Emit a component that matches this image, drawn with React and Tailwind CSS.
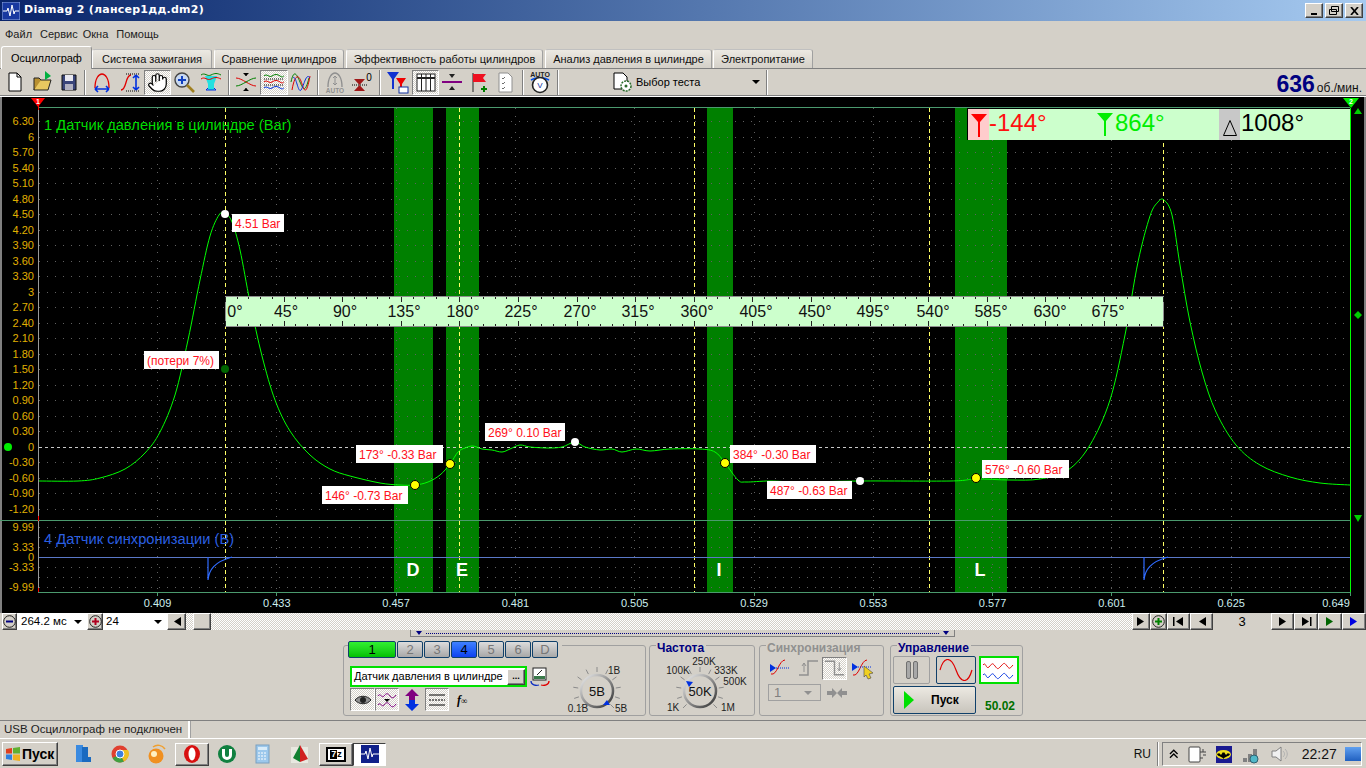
import React from 'react';
import { Hand } from 'lucide-react';

const raised = 'border border-t-white border-l-white border-r-[#404040] border-b-[#404040] shadow-[inset_-1px_-1px_0_#808080] bg-[#d4d0c8]';
const dither = 'bg-[image:repeating-conic-gradient(#ffffff_0%_25%,#d4d0c8_0%_50%)] bg-[length:2px_2px]';
const pressed = `${dither} border border-t-[#808080] border-l-[#808080] border-r-white border-b-white`;

// smooth line through points
const smooth = (pts) => {
  let d = `M${pts[0][0]} ${pts[0][1]}`;
  for (let i = 0; i < pts.length - 1; i++) {
    const p0 = pts[i - 1] || pts[i];
    const p1 = pts[i];
    const p2 = pts[i + 1];
    const p3 = pts[i + 2] || p2;
    const c1 = [p1[0] + (p2[0] - p0[0]) / 6, p1[1] + (p2[1] - p0[1]) / 6];
    const c2 = [p2[0] - (p3[0] - p1[0]) / 6, p2[1] - (p3[1] - p1[1]) / 6];
    d += `C${c1[0].toFixed(1)} ${c1[1].toFixed(1)} ${c2[0].toFixed(1)} ${c2[1].toFixed(1)} ${p2[0]} ${p2[1]}`;
  }
  return d;
};

const pressure = [
  [39, 481], [78, 481], [100, 478], [125, 469], [145, 453], [160, 432], [175, 395], [188, 340], [200, 280], [210, 236], [219, 215], [225, 213],
  [232, 222], [240, 250], [250, 302], [262, 356], [275, 400], [290, 431], [310, 455], [330, 469], [350, 476], [380, 483], [400, 485], [415, 485],
  [428, 482], [440, 475], [450, 464], [458, 452], [465, 448], [473, 446], [482, 449], [492, 450], [502, 452], [510, 449], [520, 445], [530, 447],
  [548, 448], [562, 447], [575, 442], [585, 447], [600, 450], [612, 449], [622, 452], [636, 449], [650, 451], [670, 449], [700, 449], [715, 452],
  [725, 463], [738, 480], [746, 482], [770, 481], [800, 482], [860, 481], [950, 481], [976, 479], [1010, 480], [1040, 479], [1068, 470], [1090, 445],
  [1110, 400], [1125, 335], [1138, 262], [1150, 216], [1158, 202], [1164, 200], [1172, 215], [1180, 265], [1190, 322], [1202, 372], [1216, 412],
  [1236, 445], [1260, 465], [1290, 477], [1320, 483], [1350, 485],
];

const syncDip = (x) => `M${x} 557V580C${x + 1} 570 ${x + 6} 562 ${x + 24} 557`;

const yLabels = ['6.30', '6', '5.70', '5.40', '5.10', '4.80', '4.50', '4.20', '3.90', '3.60', '3.30', '3', '2.70', '2.40', '2.10', '1.80', '1.50', '1.20', '0.90', '0.60', '0.30', '0', '-0.30', '-0.60', '-0.90', '-1.20'];
const lowLabels = [['9.99', 527], ['3.33', 547], ['0', 557], ['-3.33', 567], ['-9.99', 587]];
const xLabels = ['0.409', '0.433', '0.457', '0.481', '0.505', '0.529', '0.553', '0.577', '0.601', '0.625', '0.649'];
const angles = [[0, 235], [45, 286], [90, 345], [135, 404], [180, 463], [225, 521], [270, 580], [315, 638], [360, 697], [405, 756], [450, 815], [495, 873], [540, 933], [585, 991], [630, 1050], [675, 1108]];
const bands = [[394, 39, 'D', 413], [446, 33, 'E', 462], [707, 26, 'I', 719], [955, 52, 'L', 980]];
const notes = [
  ['4.51 Bar', 232, 214, 52],
  ['(потери 7%)', 144, 351, 75],
  ['269° 0.10 Bar', 485, 423, 80],
  ['173° -0.33 Bar', 356, 445, 87],
  ['146° -0.73 Bar', 322, 486, 86],
  ['384° -0.30 Bar', 730, 445, 86],
  ['487° -0.63 Bar', 767, 481, 85],
  ['576° -0.60 Bar', 982, 460, 87],
];
const dots = [[225, 214, '#fff'], [225, 369, '#006400'], [415, 485, '#ffff00'], [450, 464, '#ffff00'], [575, 442, '#fff'], [725, 463, '#ffff00'], [860, 481, '#fff'], [976, 478, '#ffff00']];

const Chart = () => (
  <div className="relative h-[516px] bg-black">
    <svg width="1366" height="516" viewBox="0 97 1366 516" className="block">
      <rect x="0" y="97" width="2" height="516" fill="#808080" />
      <rect x="1364" y="97" width="2" height="516" fill="#808080" />
      {bands.map(([x, w]) => <rect key={x} x={x} y="108" width={w} height="484" fill="#008000" />)}
      <g stroke="#606060" strokeDasharray="1 7" shapeRendering="crispEdges">
        {yLabels.map((l, i) => {
          const y = Math.round(121 + i * 15.52) + 0.5;
          return l === '0' ? null : <line key={l} x1="39" x2="1350" y1={y} y2={y} />;
        })}
        {[527, 537, 547, 567, 577, 587].map((y) => <line key={y} x1="39" x2="1350" y1={y + 0.5} y2={y + 0.5} />)}
        {xLabels.map((l, i) => {
          const x = Math.round(157 + i * 119.3) + 0.5;
          return <line key={l} x1={x} x2={x} y1="108" y2="592" />;
        })}
      </g>
      <line x1="39" x2="1350" y1="447.5" y2="447.5" stroke="#c8c8c8" strokeDasharray="3 3" shapeRendering="crispEdges" />
      <g stroke="#4b9a6e" shapeRendering="crispEdges">
        <line x1="38" x2="1350" y1="107.5" y2="107.5" />
        <line x1="0" x2="1350" y1="520.5" y2="520.5" />
        <line x1="38" x2="1350" y1="592.5" y2="592.5" />
        {xLabels.map((l, i) => {
          const x = Math.round(157 + i * 119.3) + 0.5;
          return <line key={l} x1={x} x2={x} y1="592" y2="596" />;
        })}
      </g>
      <line x1="38.5" x2="38.5" y1="108" y2="592" stroke="#9a9a9a" shapeRendering="crispEdges" />
      <line x1="1350.5" x2="1350.5" y1="108" y2="592" stroke="#00ff00" shapeRendering="crispEdges" />
      <line x1="38.5" x2="38.5" y1="516" y2="521" stroke="#ff0000" shapeRendering="crispEdges" />
      <line x1="38.5" x2="38.5" y1="588" y2="592" stroke="#ff0000" shapeRendering="crispEdges" />
      {[225, 459, 694, 929, 1163].map((x) => (
        <line key={x} x1={x + 0.5} x2={x + 0.5} y1="108" y2="592" stroke="#ffff66" strokeDasharray="4 3" shapeRendering="crispEdges" />
      ))}
      <line x1="39" x2="1350" y1="557.5" y2="557.5" stroke="#5a78c8" shapeRendering="crispEdges" />
      <path d={syncDip(208)} fill="none" stroke="#2f6bff" strokeWidth="1.2" />
      <path d={syncDip(1144)} fill="none" stroke="#2f6bff" strokeWidth="1.2" />
      <path d={smooth(pressure)} fill="none" stroke="#00ff00" strokeWidth="1" />

      {/* axis numbers */}
      <g fontSize="11" fill="#e0b000" textAnchor="end">
        {yLabels.map((l, i) => <text key={l} x="34" y={121 + i * 15.52 + 4}>{l}</text>)}
        {lowLabels.map(([l, y]) => <text key={l} x="34" y={y + 4}>{l}</text>)}
      </g>
      <g fontSize="11" fill="#cdeeee" textAnchor="middle">
        {xLabels.map((l, i) => <text key={l} x={Math.min(157.5 + i * 119.3, 1336)} y="607">{l}</text>)}
      </g>
      <text x="44" y="130" fontSize="14.7" fill="#00dd00">1 Датчик давления в цилиндре (Bar)</text>
      <text x="44" y="544" fontSize="14.7" fill="#2a5fe0">4 Датчик синхронизации (В)</text>
      <g fontSize="18" fontWeight="700" fill="#fff" textAnchor="middle">
        {bands.map(([x, , l, cx]) => <text key={x} x={cx} y="576">{l}</text>)}
      </g>

      {/* degree ruler */}
      <rect x="225.5" y="296.5" width="938" height="30" fill="#ccffcc" stroke="#909090" />
      {Array.from({ length: 81 }, (_, i) => {
        const x = Math.round(225 + i * 11.72) + 0.5;
        const len = i % 5 === 0 ? 5 : 2;
        return (
          <g key={i} stroke="#222" shapeRendering="crispEdges">
            <line x1={x} x2={x} y1="297" y2={297 + len} />
            <line x1={x} x2={x} y1={326 - len} y2="326" />
          </g>
        );
      })}
      <g fontSize="16" fill="#111" textAnchor="middle">
        {angles.map(([a, x]) => <text key={a} x={x} y="317">{a}°</text>)}
      </g>

      {notes.map(([t, x, y, w]) => (
        <g key={t}>
          <rect x={x} y={y} width={w} height="18" fill="#fff" />
          <text x={x + 3} y={y + 13.5} fontSize="12" fill="#ff1020">{t}</text>
        </g>
      ))}
      {dots.map(([x, y, c]) => <circle key={`${x}${y}`} cx={x} cy={y} r={c === '#ffff00' ? 4.5 : 4} fill={c} stroke={c === '#ffff00' ? '#000' : 'none'} />)}

      <circle cx="8" cy="447" r="4" fill="#00ee00" />
      <polygon points="31,98 45,98 38,107" fill="#ff0000" />
      <text x="38" y="104" fontSize="7" fontWeight="700" fill="#fff" textAnchor="middle">1</text>
      <line x1="38.5" x2="38.5" y1="104" y2="110" stroke="#ff0000" />
      <polygon points="1343,98 1359,98 1351,108" fill="#00ee00" />
      <text x="1351" y="104" fontSize="7" fontWeight="700" fill="#fff" textAnchor="middle">2</text>
      <polygon points="1354,114 1362,114 1358,108" fill="#00cc00" />
      <polygon points="1358,311 1362,315 1358,319 1354,315" fill="#00cc00" />
      <polygon points="1354,515 1362,515 1358,522" fill="#00cc00" />
    </svg>

    {/* angle readout */}
    <div className="absolute left-[967px] top-[11px] flex h-[32px] w-[383px] items-stretch border-l border-t border-black bg-[#ccffcc] text-[24px] leading-[28px]">
      <div className="flex w-[21px] items-center justify-center bg-[#ffcccc]">
        <svg width="16" height="24" viewBox="0 0 16 24"><path d="M0 1h16L9 9v15H7V9z" fill="#ff0000" /></svg>
      </div>
      <span className="w-[108px] text-[#ff1010]">-144°</span>
      <svg width="16" height="24" viewBox="0 0 16 24" className="mt-[3px]"><path d="M0 1h16L9 9v15H7V9z" fill="#00ee00" /></svg>
      <span className="ml-[2px] w-[104px] text-[#00ee00]">864°</span>
      <div className="flex w-[21px] items-end justify-center bg-[#c8c8c8] pb-[3px]">
        <svg width="16" height="18" viewBox="0 0 16 18"><path d="M8 1.5 14.5 16.5h-13z" fill="none" stroke="#000" /></svg>
      </div>
      <span className="ml-[1px] text-black">1008°</span>
    </div>
  </div>
);

const Sep = ({ w = 7 }) => (
  <div className="flex justify-center" style={{ width: w }}>
    <div className="h-[25px] w-[2px] border-l border-r border-l-[#808080] border-r-white" />
  </div>
);

const Ico = ({ children, w = 24, h = 24 }) => <svg width={w} height={h} viewBox={`0 0 ${w} ${h}`} fill="none">{children}</svg>;

const ToolBtn = ({ w = 27, on, children }) => (
  <div className={`flex h-[25px] items-center justify-center ${on ? pressed : ''}`} style={{ width: w }}>{children}</div>
);

const Toolbar = () => (
  <div className="relative flex h-[28px] items-center border-t border-b border-[#808080] pl-[1px] shadow-[0_1px_0_#ffffff]">
    <ToolBtn><Ico><path d="M6 3h8l4 4v14H6z" fill="#fff" stroke="#000" /><path d="M14 3v4h4" stroke="#000" /></Ico></ToolBtn>
    <ToolBtn><Ico><path d="M4 20 7 10h14l-3 10z" fill="#e8c860" stroke="#222" /><path d="M4 20V8h5l2 2" fill="#b89030" stroke="#222" /><path d="M15 1l6 5-6 4z" fill="#00b040" /></Ico></ToolBtn>
    <ToolBtn><Ico><path d="M5 5h14v15H5z" fill="#39447a" stroke="#111" /><rect x="8" y="5" width="8" height="6" fill="#e8e8f0" /><rect x="8" y="14" width="8" height="6" fill="#b0b0c0" /></Ico></ToolBtn>
    <Sep w={6} />
    <ToolBtn w={28}><Ico><path d="M5 18C5 8 9 4 12 4s7 4 7 14" stroke="#e00000" strokeWidth="1.3" /><path d="M5 19h14M5 19l3-3M5 19l3 3M19 19l-3-3M19 19l-3 3" stroke="#0030e0" strokeWidth="1.6" /></Ico></ToolBtn>
    <ToolBtn w={28}><Ico><path d="M3 20c6 0 4-15 10-15" stroke="#e00000" strokeWidth="1.3" /><path d="M8 4h14M8 21h14" stroke="#000" strokeDasharray="1 1" /><path d="M18 5v15M18 5l-3 3M18 5l3 3M18 20l-3-3M18 20l3-3" stroke="#0030e0" strokeWidth="1.6" /></Ico></ToolBtn>
    <ToolBtn on><Hand size={21} fill="#fff" stroke="#000" strokeWidth={1.4} /></ToolBtn>
    <ToolBtn w={26}><Ico><circle cx="10" cy="10" r="7" fill="#c8d8f0" stroke="#444" strokeWidth="1.4" /><path d="M6 10h8M10 6v8" stroke="#1040c0" strokeWidth="2" /><path d="M15 15l7 7" stroke="#a08020" strokeWidth="2.6" /></Ico></ToolBtn>
    <ToolBtn w={28}><Ico><path d="M6 6h12l-3 8v6H9v-6z" fill="#22e0e0" /><path d="M2 5c4-3 6 2 10 0s6-2 10 0" stroke="#008000" /><path d="M2 9c4-3 6 2 10 0s6-2 10 0" stroke="#e00000" /><path d="M7 20h10M7 20l2-2M17 20l-2-2" stroke="#0030e0" /></Ico></ToolBtn>
    <Sep />
    <ToolBtn w={28}><Ico><path d="M2 8c6 0 14 8 20 8" stroke="#e00000" /><path d="M2 16c6 0 14-8 20-8" stroke="#008000" /><path d="M12 3v3M12 18v3" stroke="#000" /><path d="M9 3h6l-3 3zM9 21h6l-3-3z" fill="#000" /></Ico></ToolBtn>
    <ToolBtn w={28} on><Ico><path d="M2 6c3-3 5 2 8 0s5-2 8 0 3 0 4 0" stroke="#008000" /><path d="M2 12c3-3 5 2 8 0s5-2 8 0 3 0 4 0" stroke="#e00000" /><path d="M2 18c3-3 5 2 8 0s5-2 8 0 3 0 4 0" stroke="#0030e0" /><path d="M2 9h20M2 15h20" stroke="#000" strokeDasharray="1 1" /></Ico></ToolBtn>
    <ToolBtn w={26}><Ico><path d="M2 12C5-2 8 5 11 12s5 12 9-4" stroke="#008000" /><path d="M3 20C6 3 10 4 13 14s5 8 8-8" stroke="#e00000" /><path d="M4 8c3-4 5 16 8 12s5-18 9-12" stroke="#0030e0" /></Ico></ToolBtn>
    <Sep />
    <ToolBtn><Ico><path d="M5 17C5 7 9 3 12 3s7 4 7 14" stroke="#909090" strokeWidth="1.4" /><path d="M12 6v9M10 8l2-2 2 2M10 13l2 2 2-2" stroke="#909090" /><text x="12" y="23" fontSize="6.5" fontWeight="700" textAnchor="middle" fill="#909090">AUTO</text></Ico></ToolBtn>
    <ToolBtn><Ico><path d="M4 9h11l-5.500 6zM4 21h11l-5.500-6z" fill="#a01818" /><path d="M2 15h15" stroke="#000" strokeDasharray="1 1" /><text x="19" y="11" fontSize="10" fill="#000" textAnchor="middle">0</text></Ico></ToolBtn>
    <Sep w={9} />
    <ToolBtn w={28}><Ico><path d="M1 2h12L8 9v10H6V9z" fill="#1030d0" /><path d="M10 8h10l-4 6v7h-2v-7z" fill="#f00000" /><rect x="13" y="17" width="9" height="6" fill="#fff" stroke="#1030a0" /></Ico></ToolBtn>
    <ToolBtn on><Ico><rect x="3" y="4" width="18" height="17" fill="#fff" stroke="#222" /><path d="M3 8h18" stroke="#222" strokeWidth="2" /><path d="M7.500 4v17M12 4v17M16.500 4v17" stroke="#222" /></Ico></ToolBtn>
    <ToolBtn w={25}><Ico><path d="M2 12h20" stroke="#800080" strokeWidth="2" /><path d="M9 4h6l-3 4zM9 20h6l-3-4z" fill="#222" /></Ico></ToolBtn>
    <ToolBtn><Ico><path d="M7 3v19" stroke="#222" /><path d="M7 4h13l-3 4 3 4H7z" fill="#ee1020" /><path d="M15 19h6M18 16v6" stroke="#008000" strokeWidth="2" /></Ico></ToolBtn>
    <ToolBtn w={28}><Ico><path d="M6 3h9l4 4v15H6z" fill="#fff" stroke="#909090" /><path d="M9 8l1 1 2-2M9 13l1 1 2-2M9 18l1 1 2-2" stroke="#707070" /></Ico></ToolBtn>
    <Sep />
    <ToolBtn w={28}><Ico><text x="12" y="7" fontSize="7" fontWeight="700" fill="#222" textAnchor="middle">AUTO</text><path d="M3 10c5-3 13-3 18 0" stroke="#0050f0" strokeWidth="1.6" /><circle cx="12" cy="15" r="7.500" fill="#fff" stroke="#222" strokeWidth="1.6" /><text x="12" y="18" fontSize="8" fill="#1030a0" textAnchor="middle">V</text></Ico></ToolBtn>
    <Sep />
    <div className="flex w-[205px] items-center pl-[51px] text-[11px]">
      <Ico w={21} h={24}>
        <path d="M2 3h9l4 4v12H2z" fill="#fff" stroke="#000" />
        <circle cx="14" cy="16" r="5" fill="#fff" stroke="#2a6a2a" strokeWidth="1.500" strokeDasharray="2 1" />
        <circle cx="14" cy="16" r="1.500" fill="#2a6a2a" />
      </Ico>
      <span className="ml-[3px]">Выбор теста</span>
      <span className="ml-[52px] h-0 w-0 border-x-[4px] border-t-[4px] border-x-transparent border-t-black" />
    </div>
    <Sep w={2} />
    <div className="absolute right-[4px] top-[2px] flex items-baseline text-[#111]">
      <span className="text-[23px] font-bold leading-[26px] text-[#000080]">636</span>
      <span className="ml-[2px] text-[12px]">об./мин.</span>
    </div>
  </div>
);

const tabs = [
  ['Система зажигания', 120, 2],
  ['Сравнение цилиндров', 130, 2],
  ['Эффективность работы цилиндров', 197, 2],
  ['Анализ давления в цилиндре', 167, 1],
  ['Электропитание', 100, 1],
];

const Tabs = () => (
  <div className="flex h-[24px] items-end whitespace-nowrap pl-[1px] text-[11px]">
    <div className="relative z-10 mb-[-1px] flex h-[23px] w-[91px] items-center justify-center rounded-t-[3px] border border-b-0 border-[#909090] border-l-white border-t-white bg-[#d4d0c8]">Осциллограф</div>
    {tabs.map(([t, w, m]) => (
      <div key={t} className="flex h-[19px] items-center justify-center rounded-t-[3px] border border-b-0 border-[#a0a0a0] border-l-white border-t-[#c0c0c0] bg-gradient-to-b from-[#ece9e2] to-[#d4d0c8] text-[#111]" style={{ width: w, marginRight: m }}>{t}</div>
    ))}
  </div>
);

const Tri = ({ dir = 'r', color = '#000', bar }) => (
  <svg width="14" height="11" viewBox="0 0 14 11">
    <path d={dir === 'r' ? 'M3 1l7 4.500-7 4.500z' : 'M11 1L4 5.500l7 4.500z'} fill={color} />
    {bar && <rect x={dir === 'r' ? 11 : 1} y="1" width="1.500" height="9" fill={color} />}
  </svg>
);

const RoundBtn = ({ w, sign, color }) => (
  <div className={`flex h-[17px] items-center justify-center ${raised}`} style={{ width: w }}>
    <svg width="13" height="13" viewBox="0 0 13 13">
      <circle cx="6.500" cy="6.500" r="5.800" fill="none" stroke="#222" />
      <path d={sign === '+' ? 'M3 6.500h7M6.500 3v7' : 'M3 6.500h7'} stroke={color} strokeWidth="2" />
    </svg>
  </div>
);

const NavBtn = ({ w, children }) => (
  <div className={`flex h-[17px] items-center justify-center ${raised}`} style={{ width: w }}>{children}</div>
);

const Arrow = () => <span className="h-0 w-0 border-x-[4px] border-t-[4px] border-x-transparent border-t-black" />;

const ScrollRow = () => (
  <div className="flex h-[17px] items-stretch pl-[2px] text-[11.5px]">
    <RoundBtn w={15} sign="-" color="#000080" />
    <div className="flex w-[70px] items-center justify-between bg-white pl-[4px] pr-[5px]">264.2 мс<Arrow /></div>
    <RoundBtn w={16} sign="+" color="#b00020" />
    <div className="flex w-[64px] items-center justify-between bg-white pl-[3px] pr-[5px]">24<Arrow /></div>
    <NavBtn w={19}><Tri dir="l" /></NavBtn>
    <div className={`flex-1 pl-[7px] ${dither}`}>
      <div className={`h-[17px] w-[18px] ${raised}`} />
    </div>
    <NavBtn w={18}><Tri /></NavBtn>
    <RoundBtn w={17} sign="+" color="#008000" />
    <NavBtn w={23}><Tri dir="l" bar /></NavBtn>
    <NavBtn w={23}><Tri dir="l" /></NavBtn>
    <div className="flex w-[58px] items-center justify-center text-[13px]">3</div>
    <NavBtn w={23}><Tri /></NavBtn>
    <NavBtn w={24}><Tri bar /></NavBtn>
    <NavBtn w={24}><Tri color="#006400" /></NavBtn>
    <NavBtn w={24}><Tri color="#0000e0" /></NavBtn>
  </div>
);

const Knob = ({ w, cx, cy, value, labels, pointer }) => (
  <svg width={w} height="60" viewBox={`0 0 ${w} 60`} className="block">
    <defs>
      <linearGradient id="knobRing" x1="0" y1="0" x2="1" y2="1">
        <stop offset="0" stopColor="#f0f0f0" />
        <stop offset="1" stopColor="#303030" />
      </linearGradient>
    </defs>
    {Array.from({ length: 11 }, (_, i) => {
      const a = ((135 + i * 27) * Math.PI) / 180;
      return <line key={i} x1={cx + Math.cos(a) * 19} y1={cy + Math.sin(a) * 19} x2={cx + Math.cos(a) * 24} y2={cy + Math.sin(a) * 24} stroke="#8a8a8a" />;
    })}
    <circle cx={cx} cy={cy} r="16" fill="#d4d0c8" stroke="url(#knobRing)" strokeWidth="2.500" />
    <path d={pointer} fill="#0030e0" />
    <text x={cx} y={cy + 5} fontSize="13" textAnchor="middle" fill="#111">{value}</text>
    {labels.map(([t, x, y]) => <text key={t} x={x} y={y + 4} fontSize="10" textAnchor="middle" fill="#222">{t}</text>)}
  </svg>
);

const ChanBtn = ({ w = 26, label, cls }) => (
  <div className={`flex h-[17px] items-center justify-center rounded-[2px] border border-[#10406a] text-[13px] ${cls}`} style={{ width: w }}>{label}</div>
);

const Box = ({ w, ml = 0, children }) => (
  <div className="mt-[8px] h-[71px] rounded-[3px] border border-[#a0a0a0]" style={{ width: w, marginLeft: ml }}>{children}</div>
);

const Title = ({ color, w, children }) => (
  <div className={`ml-[6px] mt-[-5px] h-[14px] bg-[#d4d0c8] pl-[1px] text-[12px] font-bold leading-[14px] ${color}`} style={{ width: w }}>{children}</div>
);

const grayBtn = 'bg-gradient-to-b from-[#dcdcdc] to-[#a8a8a8] text-[#777]';

const Panel = () => (
  <div className="h-[87px]">
    <div className="ml-[410px] flex h-[7px] w-[545px] items-center justify-between border border-t-0 border-[#808080] bg-[#d4d0c8] px-[5px]">
      <span className="h-0 w-0 border-x-[3px] border-t-[4px] border-x-transparent border-t-[#000080]" />
      <div className="mx-[4px] h-0 flex-1 border-t border-dotted border-[#000080]" />
      <span className="h-0 w-0 border-x-[3px] border-t-[4px] border-x-transparent border-t-[#000080]" />
    </div>
    <div className="ml-[343px] flex items-start">
      {/* channels */}
      <Box w={303}>
        <div className="ml-[4px] mt-[-5px] flex w-[214px] gap-[1px] bg-[#d4d0c8]">
          <ChanBtn w={48} label="1" cls="bg-gradient-to-b from-[#30f030] to-[#00c000] text-black" />
          <ChanBtn label="2" cls={grayBtn} />
          <ChanBtn label="3" cls={grayBtn} />
          <ChanBtn label="4" cls="bg-gradient-to-b from-[#4080ff] to-[#1040f0] text-black" />
          <ChanBtn label="5" cls={grayBtn} />
          <ChanBtn label="6" cls={grayBtn} />
          <ChanBtn label="D" cls={grayBtn} />
        </div>
        <div className="flex">
          <div className="ml-[6px] w-[206px] pt-[8px]">
            <div className="flex items-center">
              <div className="flex h-[21px] w-[177px] items-center justify-between whitespace-nowrap border-2 border-[#00e000] bg-white pl-[2px] text-[11px]">
                Датчик давления в цилиндре
                <div className={`flex h-[16px] w-[18px] items-center justify-center text-[9px] font-bold leading-none ${raised}`}>...</div>
              </div>
              <div className="ml-[3px]">
                <Ico w={20} h={20}>
                  <rect x="3" y="1" width="13" height="12" fill="#fff" stroke="#222" />
                  <rect x="4" y="9" width="11" height="3" fill="#3a7a4a" />
                  <path d="M7 8l5-5" stroke="#222" />
                  <path d="M1 14c0 4 5 5 8 4" stroke="#1030c0" strokeWidth="1.300" />
                  <path d="M19 14c0 4-5 5-8 4" stroke="#e00000" strokeWidth="1.300" />
                </Ico>
              </div>
            </div>
            <div className="mt-[1px] flex items-center">
              <div className={`flex h-[23px] w-[25px] items-center justify-center ${pressed}`}>
                <Ico w={18} h={14}><path d="M1 7c4-5 12-5 16 0-4 5-12 5-16 0z" fill="#909090" stroke="#222" /><circle cx="9" cy="7" r="3" fill="#222" /></Ico>
              </div>
              <div className={`flex h-[23px] w-[24px] items-center justify-center ${pressed}`}>
                <Ico w={20} h={18}><path d="M1 5c2-4 4 3 6 0s4-3 6 0 4 2 6-1M1 14c2-4 4 3 6 0s4-3 6 0 4 2 6-1" stroke="#800080" /><path d="M7 8h6l-3 3z" fill="#000" /></Ico>
              </div>
              <div className="flex w-[26px] justify-center">
                <Ico w={16} h={22}><path d="M8 0l7 7h-4v4H5V7H1z" fill="#800080" /><path d="M8 22l7-7h-4v-4H5v4H1z" fill="#0030e0" /></Ico>
              </div>
              <div className={`flex h-[23px] w-[24px] items-center justify-center ${pressed}`}>
                <Ico w={18} h={14}><path d="M1 2h16M1 12h16" stroke="#000" /><path d="M1 7h16" stroke="#000" strokeDasharray="2 1" /></Ico>
              </div>
              <i className="ml-[8px] text-[12px] font-bold" style={{ fontFamily: '"Liberation Serif", serif' }}>f<span className="text-[9px]">∞</span></i>
            </div>
          </div>
          <Knob w={80} cx={41} cy={33} value="5В" pointer="M51 42l3 5-7 0z"
            labels={[['1В', 58, 12], ['0.1В', 22, 50], ['5В', 65, 50]]} />
        </div>
      </Box>
      {/* frequency */}
      <Box w={106} ml={3}>
        <Title color="text-[#000080]" w={50}>Частота</Title>
        <Knob w={104} cx={50} cy={36} value="50K" pointer="M36 26l7 1-4 5z"
          labels={[['100K', 28, 15], ['250K', 54, 6], ['333K', 76, 15], ['500K', 85, 26], ['1K', 23, 52], ['1M', 78, 52]]} />
      </Box>
      {/* sync */}
      <Box w={125} ml={4}>
        <Title color="text-[#909090]" w={92}>Синхронизация</Title>
        <div className="ml-[8px] flex h-[26px] items-center">
          <div className="flex w-[24px] justify-center"><Ico><path d="M3 18c6 2 8-14 14-14" stroke="#e00000" /><path d="M6 12h16" stroke="#0030e0" strokeDasharray="1 1" /><path d="M2 8l6 4-6 4z" fill="#0030e0" /></Ico></div>
          <div className="ml-[4px] flex w-[26px] justify-center"><Ico><path d="M2 19h9V5h10" stroke="#909090" strokeWidth="1.500" /><path d="M7 7v9M5 10l2-3 2 3" stroke="#909090" /></Ico></div>
          <div className={`flex h-[23px] w-[25px] items-center justify-center ${pressed}`}><Ico><path d="M2 5h10v14h10" stroke="#909090" strokeWidth="1.500" /><path d="M17 6v9M15 12l2 3 2-3" stroke="#909090" /></Ico></div>
          <div className="ml-[4px] flex w-[24px] justify-center"><Ico><path d="M2 19c6 2 8-15 14-15" stroke="#e00000" /><path d="M5 11h16" stroke="#0030e0" strokeDasharray="1 1" /><path d="M1 7l6 4-6 4z" fill="#0030e0" /><path d="M13 10l9 7-4 1 2 4-3 1-2-4-2 2z" fill="#f0d020" stroke="#444" strokeWidth=".6" /></Ico></div>
        </div>
        <div className="ml-[8px] mt-[3px] flex items-center">
          <div className="flex h-[17px] w-[53px] items-center justify-between border border-[#a0a0a0] pl-[5px] pr-[8px] text-[13px] text-[#808080]">
            1<span className="h-0 w-0 border-x-[4px] border-t-[4px] border-x-transparent border-t-[#909090]" />
          </div>
          <div className="ml-[6px]"><Ico w={20} h={10}><path d="M0 3h5V0l5 5-5 5V7H0zM20 3h-5V0l-5 5 5 5V7h5z" fill="#909090" /></Ico></div>
        </div>
      </Box>
      {/* control */}
      <Box w={133} ml={6}>
        <Title color="text-[#000080]" w={74}>Управление</Title>
        <div className="ml-[2px] mt-[1px] flex">
          <div className="flex h-[28px] w-[37px] items-center justify-center gap-[2px] rounded-[2px] border border-[#a0a0a0]">
            <span className="h-[18px] w-[5px] rounded-[2px] border border-[#707070] bg-[#a8a8a8]" />
            <span className="h-[18px] w-[5px] rounded-[2px] border border-[#707070] bg-[#a8a8a8]" />
          </div>
          <div className="ml-[6px] flex h-[28px] w-[40px] items-center justify-center rounded-[2px] border border-[#10406a]">
            <Ico w={34} h={22}><path d="M1 11C5-3 12-3 17 11s12 14 16 0" stroke="#e00000" strokeWidth="1.200" /></Ico>
          </div>
          <div className="ml-[3px] flex h-[28px] w-[40px] items-center justify-center border-2 border-[#00e000] bg-white">
            <Ico w={34} h={22}><path d="M1 6c3-4 3 5 6 2s3-5 6-1 3 3 6 0 3-4 6 0 3 2 6-1" stroke="#e00000" strokeWidth=".9" /><path d="M1 16c3-4 3 5 6 2s3-5 6-1 3 3 6 0 3-4 6 0 3 2 6-1" stroke="#0030e0" strokeWidth=".9" /></Ico>
          </div>
        </div>
        <div className="ml-[2px] mt-[2px] flex items-end">
          <div className="flex h-[28px] w-[83px] items-center rounded-[2px] border border-[#10406a] bg-gradient-to-b from-[#ece9e2] to-[#c8c4bc] pl-[10px] text-[12px] font-bold">
            <svg width="10" height="18" viewBox="0 0 10 18"><path d="M0 0l10 9-10 9z" fill="#00e000" /></svg>
            <span className="ml-[17px]">Пуск</span>
          </div>
          <span className="ml-[9px] text-[12px] font-bold leading-[16px] text-[#007000]">50.02</span>
        </div>
      </Box>
    </div>
  </div>
);

const StatusBar = () => (
  <div className="mt-[3px] flex h-[19px] border-t border-b border-t-[#808080] border-b-white text-[11.5px]">
    <div className="flex w-[190px] items-center whitespace-nowrap border-r-2 border-white pl-[4px] text-[#222]">USB Осциллограф не подключен</div>
    <div className="flex-1 border-l border-[#a0a0a0]" />
  </div>
);

const TaskSlot = ({ w = 36, active, boxed, children }) => {
  const frame = active
    ? 'border border-t-[#404040] border-l-[#404040] border-r-white border-b-white bg-white'
    : boxed ? raised : '';
  return <div className={`flex h-[23px] items-center justify-center ${frame}`} style={{ width: w }}>{children}</div>;
};

const Taskbar = () => (
  <div className="mt-[1px] flex h-[28px] items-center pl-[2px] text-[12px]">
    <div className={`flex h-[24px] w-[56px] items-center pl-[2px] text-[14px] font-bold ${raised}`}>
      <svg width="16" height="14" viewBox="0 0 16 14" className="shrink-0">
        <path d="M1 2l6-1v5.500H1z" fill="#e04020" /><path d="M8 1l7-1v6.500H8z" fill="#60b030" />
        <path d="M1 7.500h6V13l-6-1z" fill="#3080e0" /><path d="M8 7.500h7V14l-7-1z" fill="#f0b020" />
      </svg>
      <span className="ml-[1px]">Пуск</span>
    </div>
    <div className="ml-[7px] flex items-center">
      <TaskSlot><Ico w={20} h={20}><rect x="3" y="1" width="7" height="17" fill="#3a8ae0" /><rect x="9" y="3" width="6" height="15" fill="#1a6ac0" /><rect x="14" y="13" width="4" height="5" fill="#1a6ac0" /></Ico></TaskSlot>
      <TaskSlot w={38}><Ico w={20} h={20}><circle cx="10" cy="10" r="8.500" fill="#e04030" /><path d="M10 10 2.500 14A8.500 8.500 0 0 0 14 17.500z" fill="#40a040" /><path d="M10 10l4 7.500A8.500 8.500 0 0 0 18 6H10z" fill="#f0c020" /><circle cx="10" cy="10" r="4" fill="#4080e0" stroke="#fff" /></Ico></TaskSlot>
      <TaskSlot><Ico w={20} h={20}><circle cx="9" cy="12" r="7.500" fill="#f09020" /><circle cx="7" cy="10" r="3" fill="#fff0c0" /><path d="M6 3c4-3 9-2 12 2" stroke="#f0a030" strokeWidth="1.500" /></Ico></TaskSlot>
      <TaskSlot w={34} boxed><Ico w={20} h={20}><ellipse cx="10" cy="10" rx="8" ry="9" fill="#d81010" /><ellipse cx="10" cy="10" rx="3.500" ry="6.500" fill="#fff" /></Ico></TaskSlot>
      <TaskSlot><Ico w={20} h={20}><circle cx="10" cy="10" r="9" fill="#108040" /><path d="M5 5v6a5 5 0 0 0 10 0V5h-3v6a2 2 0 0 1-4 0V5z" fill="#fff" /></Ico></TaskSlot>
      <TaskSlot><Ico w={20} h={20}><rect x="3" y="1" width="13" height="18" fill="#9cc8ec" stroke="#7aa0c0" /><rect x="5" y="3" width="9" height="3" fill="#d8ecfa" /><path d="M5 9h9M5 12h9M5 15h9" stroke="#fff" strokeDasharray="2 1" /></Ico></TaskSlot>
      <TaskSlot w={38}><Ico w={20} h={20}><rect x="1" y="3" width="17" height="16" fill="#e8e8e0" /><path d="M10 1 3 14l7 4z" fill="#108030" /><path d="M10 1l8 14-8 3z" fill="#d02020" /></Ico></TaskSlot>
      <TaskSlot w={34} boxed><div className="flex h-[15px] w-[20px] items-center justify-center border-2 border-black bg-white text-[9px] font-bold leading-none"><span className="bg-black px-[1px] text-white">7</span>z</div></TaskSlot>
      <TaskSlot w={33} active>
        <svg width="18" height="18" viewBox="0 0 18 18"><rect width="18" height="18" fill="#10208a" /><path d="M0 9h4l1-3 2 8 2-11 2 9 1-3h6" stroke="#fff" fill="none" /></svg>
      </TaskSlot>
    </div>
    <span className="ml-auto text-[#111]">RU</span>
    <div className="ml-[6px] h-[24px] w-[2px] border-l border-r border-l-[#808080] border-r-white" />
    <div className="ml-[3px] mr-[4px] flex h-[24px] w-[200px] items-center border border-t-[#808080] border-l-[#808080] border-b-white border-r-white">
      <svg width="10" height="10" viewBox="0 0 10 10" className="ml-[6px]"><path d="M1 5l4-4 4 4M1 9l4-4 4 4" stroke="#000" strokeWidth="1.400" fill="none" /></svg>
      <div className="ml-[8px]"><Ico w={20} h={20}><rect x="2" y="3" width="11" height="15" rx="1" fill="#fff" stroke="#444" /><path d="M13 8h3V5M16 8h3M16 11h3M16 14h-3" stroke="#444" /></Ico></div>
      <div className="ml-[9px] flex h-[17px] w-[17px] items-center justify-center bg-[#1a1a90]">
        <svg width="15" height="9" viewBox="0 0 15 9"><ellipse cx="7.500" cy="4.500" rx="7.500" ry="4.500" fill="#f0e020" /><path d="M1 4c3-2 3 0 4 1l2-3 .5 1h0l.5-1 2 3c1-1 1-3 4-1-1 3-5 2-6.500 5C6 6 2 7 1 4z" fill="#000" /></svg>
      </div>
      <div className="ml-[9px]"><Ico w={20} h={20}><path d="M2 14h4v4H2zM7 10h4v8H7zM12 5h4v10h-4z" fill="#808080" /><circle cx="13" cy="15" r="4" fill="#50b8c8" stroke="#306070" /></Ico></div>
      <div className="ml-[8px]"><Ico w={20} h={20}><path d="M3 7h4l5-4v14l-5-4H3z" fill="#f0f0f0" stroke="#808080" /><path d="M14 7c2 2 2 4 0 6M16 5c3 3 3 7 0 10" stroke="#b0b0b0" /></Ico></div>
      <span className="ml-[13px] text-[14px] text-[#111]">22:27</span>
      <div className="ml-[8px] h-[14px] w-[17px] bg-gradient-to-b from-[#60a0f0] to-[#2060c0]" />
    </div>
  </div>
);

export default function App() {
  return (
    <div className="flex h-[768px] w-[1366px] flex-col overflow-hidden bg-[#d4d0c8] text-black" style={{ fontFamily: '"Liberation Sans", Arial, sans-serif' }}>
      <div className="flex h-[21px] shrink-0 items-center bg-gradient-to-r from-[#0a246a] to-[#a6caf0] pl-[2px]">
        <svg width="18" height="18" viewBox="0 0 18 18"><rect width="18" height="18" fill="#1838a0" stroke="#90a8e0" /><path d="M1 9h4l1-3 2 8 2-11 2 9 1-3h4" stroke="#fff" fill="none" /></svg>
        <span className="ml-[4px] text-[11px] font-bold tracking-[0.25px] text-white" style={{ fontFamily: '"DejaVu Sans", sans-serif' }}>Diamag 2 (лансер1дд.dm2)</span>
        <div className="ml-auto mr-[3px] flex gap-[2px]">
          <div className={`flex h-[15px] w-[18px] items-end justify-center pb-[2px] ${raised}`}><span className="h-[2px] w-[6px] bg-black" /></div>
          <div className={`flex h-[15px] w-[18px] items-center justify-center ${raised}`}><svg width="10" height="9" viewBox="0 0 10 9"><path d="M2.500 .5h7v5h-7zM.5 3.500h7v5h-7z" fill="#d4d0c8" stroke="#000" /></svg></div>
          <div className={`flex h-[15px] w-[18px] items-center justify-center ${raised}`}><svg width="9" height="8" viewBox="0 0 9 8"><path d="M1 0l7 8M8 0L1 8" stroke="#000" strokeWidth="1.700" /></svg></div>
        </div>
      </div>
      <div className="flex h-[23px] shrink-0 items-center gap-[8px] pl-[5px] pt-[4px] text-[11px] text-[#222]">
        <span>Файл</span><span>Сервис</span><span className="ml-[-3px]">Окна</span><span>Помощь</span>
      </div>
      <Tabs />
      <Toolbar />
      <div className="h-[1px] shrink-0" />
      <Chart />
      <ScrollRow />
      <Panel />
      <StatusBar />
      <Taskbar />
    </div>
  );
}
